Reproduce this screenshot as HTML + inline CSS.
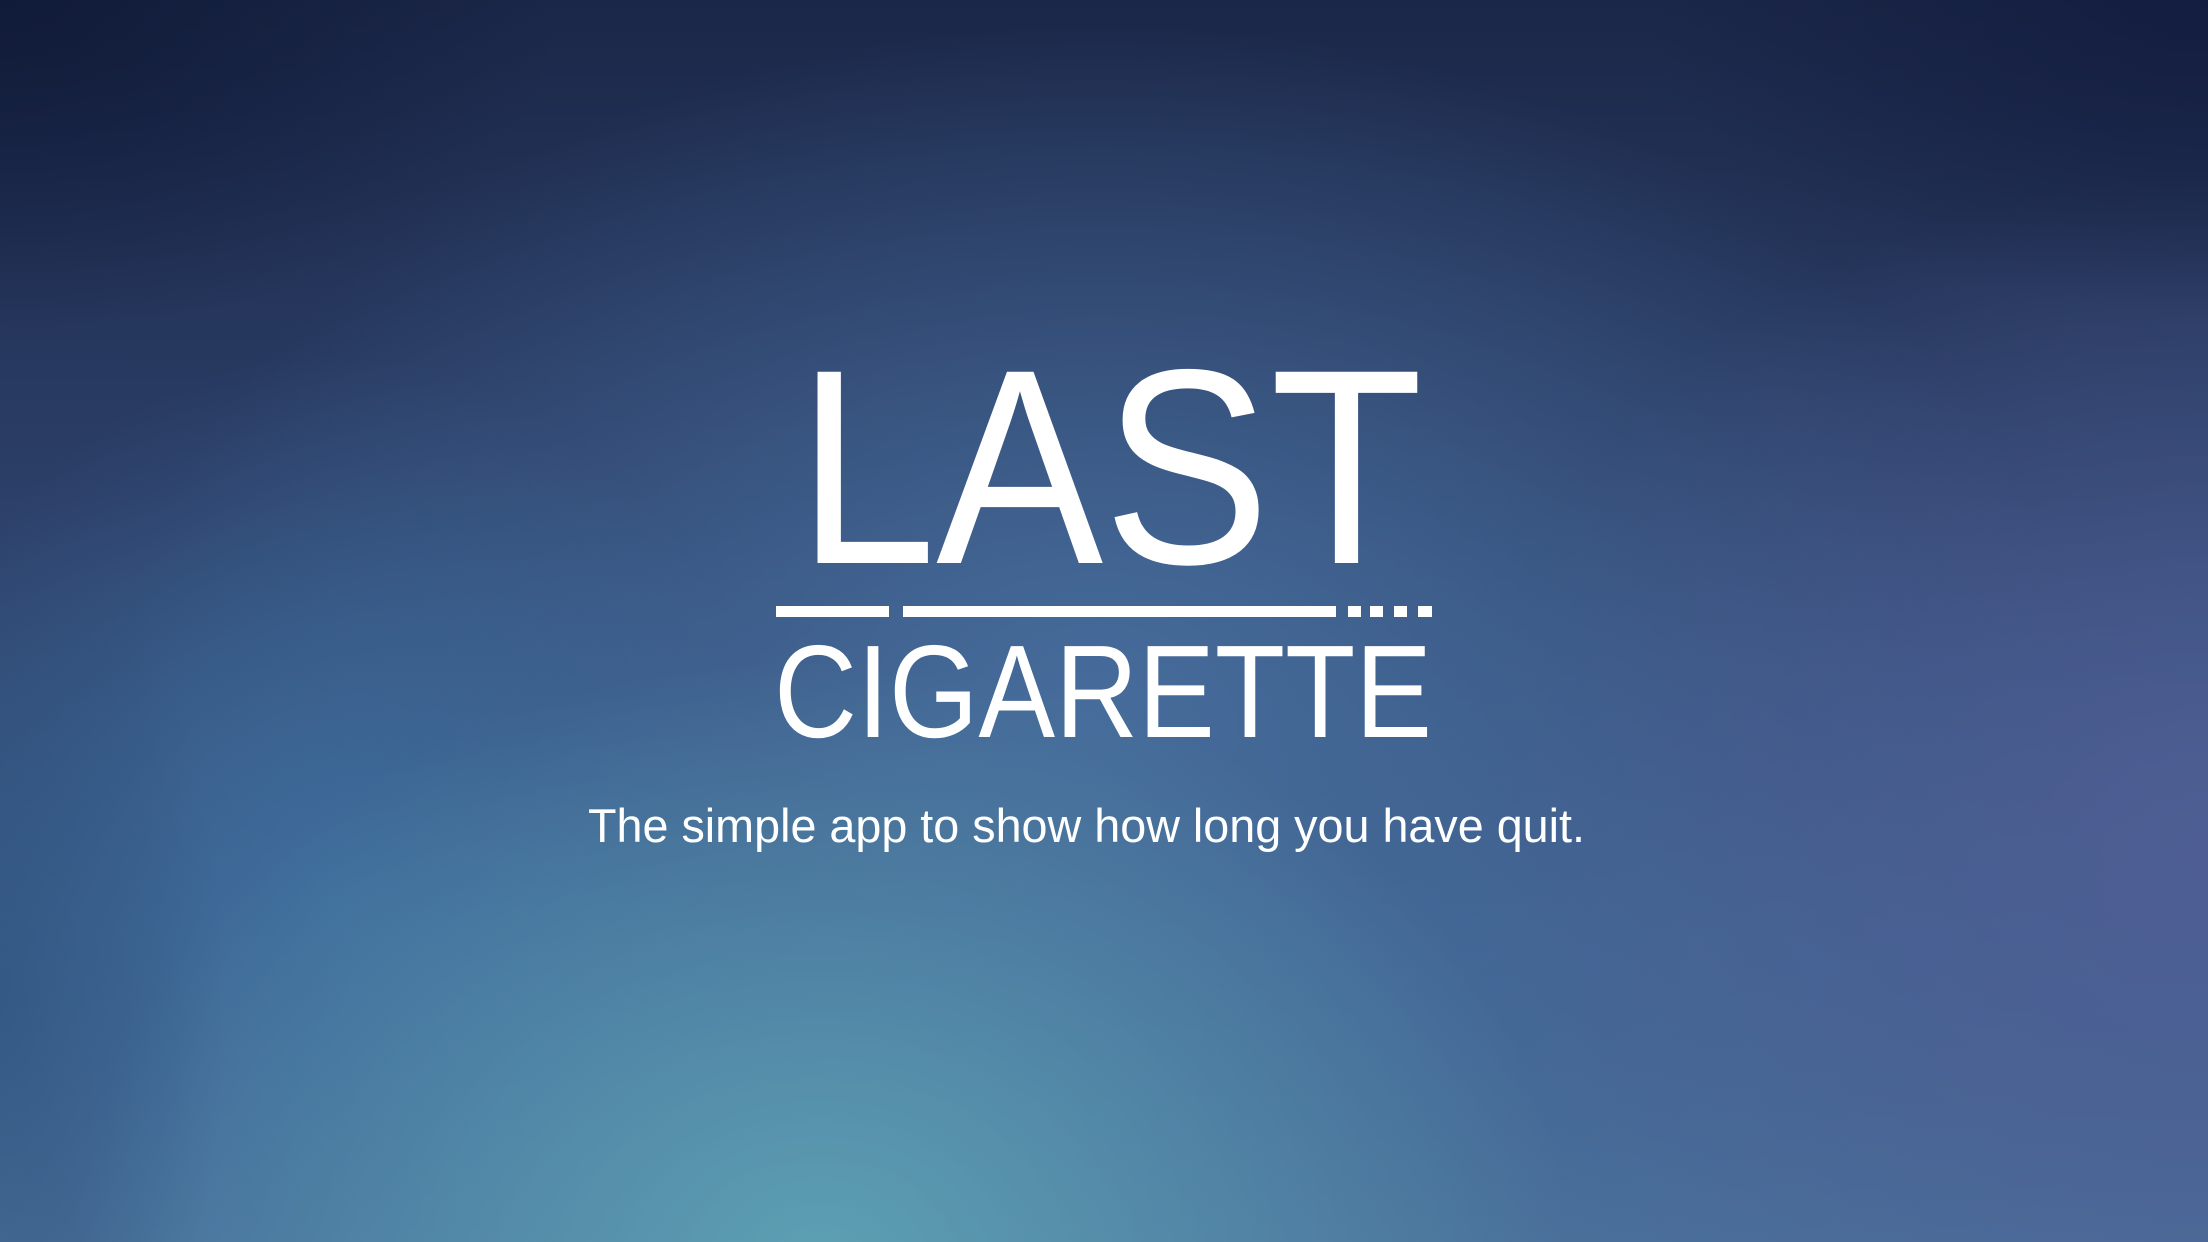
<!DOCTYPE html>
<html><head><meta charset="utf-8">
<style>
html,body{margin:0;padding:0;}
body{width:2208px;height:1242px;overflow:hidden;position:relative;
background:
radial-gradient(ellipse 1000px 800px at 820px 1260px, rgba(95,165,182,0.9), rgba(95,165,182,0) 75%),
radial-gradient(ellipse 600px 700px at 330px 880px, rgba(62,112,160,0.7), rgba(62,112,160,0) 75%),
radial-gradient(ellipse 1000px 900px at 2208px 850px, rgba(78,94,148,1), rgba(78,94,148,0) 75%),
radial-gradient(ellipse 1300px 900px at 1100px 700px, rgba(70,108,155,1), rgba(70,108,155,0) 75%),
linear-gradient(180deg,#1b2748 0%,#2c3f68 40%,#3f6290 75%,#4a709a 100%);
}
.tl{position:absolute;left:0;top:0;width:2208px;height:1242px;
background:
radial-gradient(ellipse 750px 450px at 0 0, rgba(15,25,55,0.9), rgba(15,25,55,0) 75%),
radial-gradient(ellipse 750px 420px at 2208px 0, rgba(18,28,62,0.9), rgba(18,28,62,0) 75%),
radial-gradient(ellipse 300px 700px at 0 1000px, rgba(40,75,115,0.5), rgba(40,75,115,0) 75%);}
svg{position:absolute;left:0;top:0;}
</style></head><body>
<div class="tl"></div>
<svg width="2208" height="1242" xmlns="http://www.w3.org/2000/svg">
<g fill="#fff" font-family="Liberation Sans, sans-serif">
<text x="797" y="563" font-size="278" textLength="626" lengthAdjust="spacingAndGlyphs">LAST</text>
<rect x="776" y="606" width="113" height="11"/>
<rect x="903" y="606" width="433" height="11"/>
<rect x="1348" y="606" width="13" height="11"/>
<rect x="1370" y="606" width="13" height="11"/>
<rect x="1394" y="606" width="13" height="11"/>
<rect x="1418" y="606" width="14" height="11"/>
<text x="774" y="737" font-size="132" textLength="658" lengthAdjust="spacingAndGlyphs">CIGARETTE</text>
<text x="588" y="842" font-size="47" textLength="997" lengthAdjust="spacingAndGlyphs">The simple app to show how long you have quit.</text>
</g>
</svg>
</body></html>
